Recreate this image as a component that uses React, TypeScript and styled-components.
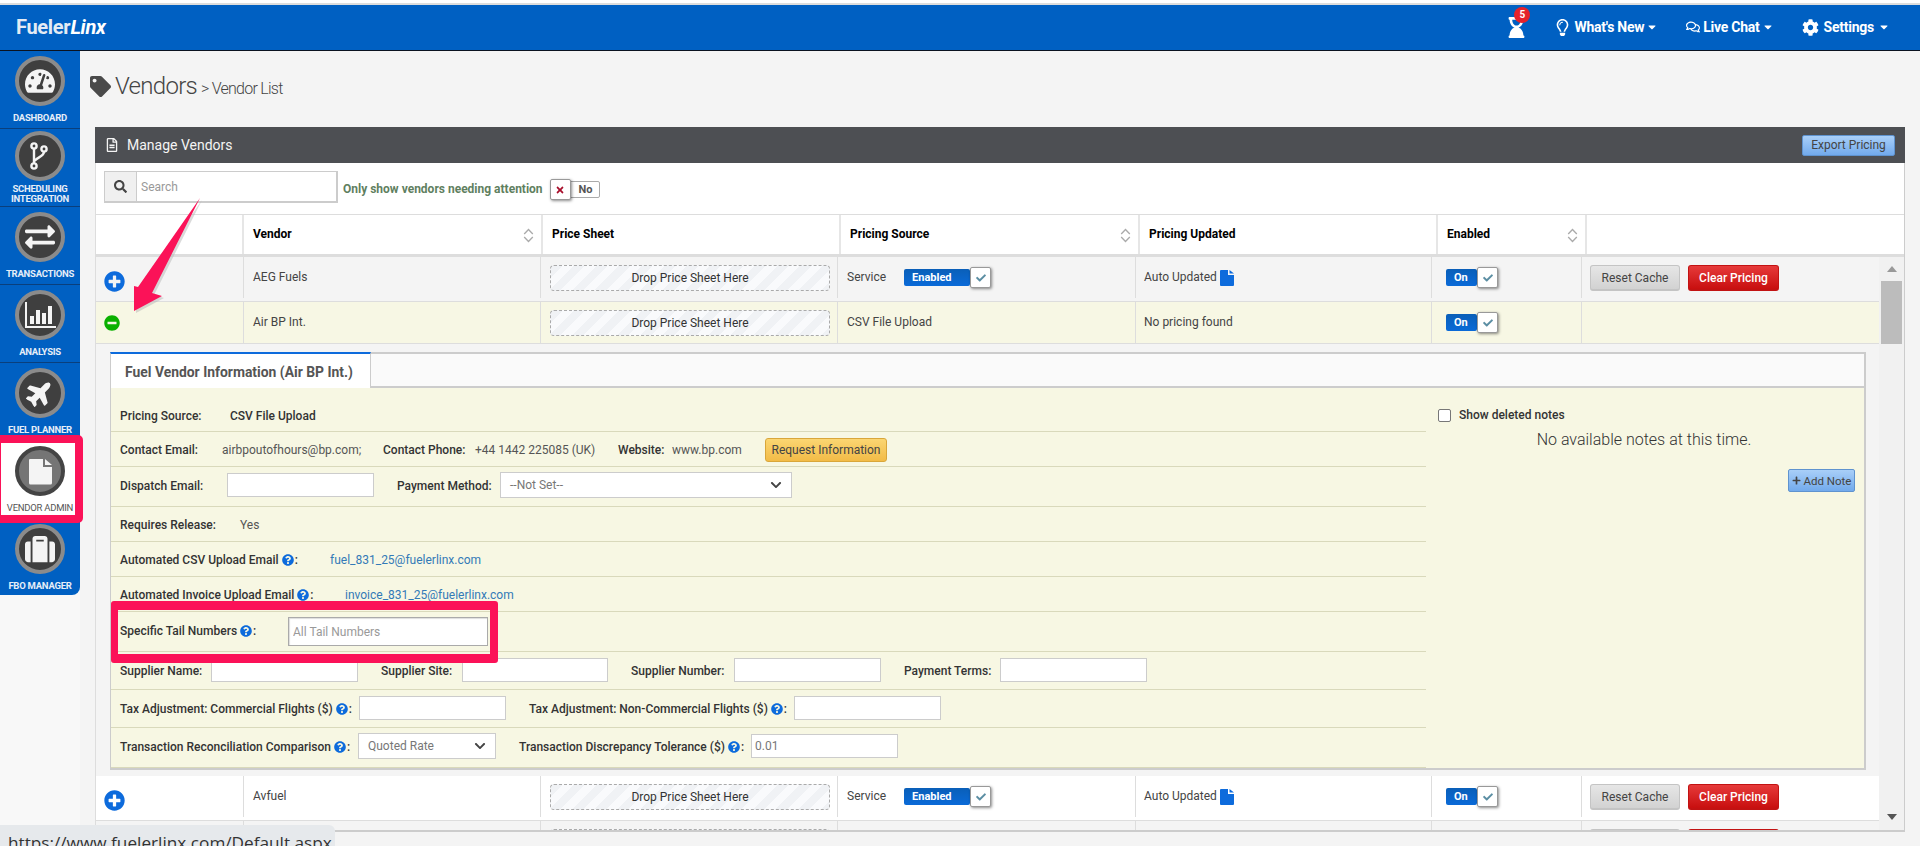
import React from "react";
import styled, { createGlobalStyle } from "styled-components";
import {
  FaCaretDown, FaCheck, FaChevronDown, FaCog, FaExchangeAlt, FaFile,
  FaHourglassEnd, FaMinusCircle, FaPlane, FaPlus, FaPlusCircle, FaQuestionCircle,
  FaRegComments, FaRegFileAlt, FaRegLightbulb, FaSearch, FaSuitcase, FaTachometerAlt, FaTag, FaTimes,
} from "react-icons/fa";

const Global = createGlobalStyle`
  html, body { margin: 0; padding: 0; background: #f4f4f4; overflow: hidden; }
  * { box-sizing: border-box; }
  body { font-family: Roboto, "Liberation Sans", sans-serif; font-size: 12px; color: #444; }
`;

const Page = styled.div`
  position: relative; width: 1920px; height: 846px; overflow: hidden;
  display: flex; flex-direction: column; background: #f4f4f4;
`;
const TopStrip = styled.div`height: 5px; background: #fff; border-bottom: 2px solid #ddd;`;
const Navbar = styled.header`
  height: 46px; background: #0060c2; border-bottom: 1px solid #0b1320;
  display: flex; align-items: center; justify-content: space-between; padding: 0 30px 1px 16px; color: #fff;
`;
const Logo = styled.div`
  font-size: 20px; font-weight: 700; color: #e4ebf4; letter-spacing: -0.3px;
  em { color: #fff; font-style: italic; }
`;
const NavRight = styled.nav`display: flex; align-items: center;`;
const HourglassWrap = styled.div`
  position: relative; width: 17px; height: 21px; margin-right: 29px; font-size: 21px; display: flex;
  align-items: center; justify-content: center;
`;
const Badge = styled.span`
  position: absolute; top: -10px; left: 6px; width: 16px; height: 16px; border-radius: 50%;
  background: #e5222c; font-size: 10px; font-weight: 700; line-height: 16px; text-align: center; color: #fff;
`;
const NavItem = styled.div<{ $ml?: number }>`
  display: flex; align-items: center; font-size: 14px; font-weight: 700; color: #fff;
  margin-left: ${(p) => p.$ml ?? 0}px; letter-spacing: -0.25px; white-space: nowrap;
`;
const NavIcon = styled.span<{ $mr: number; $size: number }>`
  display: flex; margin-right: ${(p) => p.$mr}px; font-size: ${(p) => p.$size}px;
`;
const Caret = styled.span<{ $ml: number }>`display: flex; margin-left: ${(p) => p.$ml}px; font-size: 12px;`;

const Body = styled.div`flex: 1; display: flex; min-height: 0;`;
const SideCol = styled.div`width: 80px; background: #f8f8f8; flex: none;`;
const Sidebar = styled.aside`
  width: 80px; height: 544px; background: #0060c2; border-bottom-right-radius: 8px; overflow: hidden;
`;
const SideItem = styled.div<{ $compact?: boolean; $active?: boolean; $rule?: boolean }>`
  height: 78px; display: flex; flex-direction: column; align-items: center;
  padding-top: ${(p) => (p.$compact ? 2 : 5)}px;
  background: ${(p) => (p.$active ? "#fff" : "transparent")};
  border-bottom: ${(p) => (p.$rule ? "1px solid #0a3f7c" : "none")};
`;
const Circle = styled.div<{ $active?: boolean; $size: number }>`
  width: 50px; height: 50px; border-radius: 50%; flex: none; display: flex; align-items: center; justify-content: center;
  background: ${(p) => (p.$active ? "#757575" : "#3f3f3f")};
  border: 4px solid ${(p) => (p.$active ? "#444" : "#8b8b8b")};
  color: #f4f4f4; font-size: ${(p) => p.$size}px;
`;
const PlaneTurn = styled.span`display: flex; transform: rotate(-45deg);`;
const SideLabel = styled.div<{ $active?: boolean; $compact?: boolean }>`
  margin-top: ${(p) => (p.$compact ? 3 : 7)}px; font-size: 9.5px; line-height: 10px; text-align: center;
  font-weight: ${(p) => (p.$active ? 400 : 700)}; letter-spacing: -0.25px;
  color: ${(p) => (p.$active ? "#555" : "#e6eef8")};
`;

const Main = styled.main`flex: 1; min-width: 0; padding: 0 15px;`;
const TitleRow = styled.div`
  height: 76px; padding-bottom: 6px; margin-left: -5px; display: flex; align-items: center; color: #444;
`;
const TitleIcon = styled.span`display: flex; font-size: 21px; margin-right: 4px; color: #4a4a4a;`;
const Title = styled.h1`margin: 0; font-size: 24px; font-weight: 300; letter-spacing: -0.7px;`;
const SubTitle = styled.span`font-size: 16px; font-weight: 300; margin: 4px 0 0 4px; letter-spacing: -0.75px;`;

const PanelHeader = styled.div`
  height: 36px; background: #4d4f53; color: #fff; display: flex; align-items: center; justify-content: space-between;
  padding: 0 10px; font-size: 14px;
`;
const PanelTitle = styled.div`display: flex; align-items: center; gap: 8px; color: #f4f4f4;`;
const BlueBtn = styled.button<{ $w: number; $h: number; $fs: number }>`
  width: ${(p) => p.$w}px; height: ${(p) => p.$h}px; padding: 0; border: 1px solid #5f93cf; border-radius: 2px;
  background: linear-gradient(#a9cff8, #72aaec); color: #444; font: 400 ${(p) => p.$fs}px Roboto, sans-serif;
  display: flex; align-items: center; justify-content: center; gap: 3px;
`;
const PanelBody = styled.div`
  background: #fff; border-left: 1px solid #ddd; border-right: 1px solid #ccc; border-bottom: 2px solid #ccc;
`;
const SearchRow = styled.div`
  height: 52px; border-bottom: 1px solid #ddd; display: flex; align-items: flex-start; padding: 8px 0 0 8px;
`;
const SearchBox = styled.div`
  width: 234px; height: 32px; display: flex; border: 1px solid #ccc; border-width: 1px 2px 2px 1px;
`;
const SearchIcon = styled.div`
  width: 32px; background: #f0f0f0; border-right: 1px solid #ccc; display: flex; align-items: center; justify-content: center;
  font-size: 13px; color: #444;
`;
const SearchInput = styled.input`
  flex: 1; min-width: 0; border: 0; outline: 0; padding: 0 4px; font: 12px Roboto, sans-serif; color: #555;
  &::placeholder { color: #999; }
`;
const AttentionLabel = styled.div`
  margin: 11px 7px 0 5px; font-size: 12px; font-weight: 700; color: #5f7f5f; white-space: nowrap;
`;
const NoToggle = styled.div`position: relative; margin-top: 10px; width: 50px; height: 17px; border: 1px solid #aaa; border-radius: 2px;`;
const NoText = styled.span`position: absolute; left: 28px; top: 1px; font-size: 11px; font-weight: 700; color: #555;`;
const ToggleHandle = styled.span<{ $left?: number; $right?: number; $top?: number }>`
  position: absolute; top: ${(p) => p.$top ?? -2}px; width: 21px; height: 21px; background: #fff;
  ${(p) => (p.$left !== undefined ? `left:${p.$left}px;` : "")}
  ${(p) => (p.$right !== undefined ? `right:${p.$right}px;` : "")}
  border: 1px solid #999; border-radius: 2px; box-shadow: 1px 1px 3px rgba(0,0,0,.45);
  display: flex; align-items: center; justify-content: center; font-size: 10px;
`;
const HeadGrid = styled.div`
  height: 42px; display: grid; grid-template-columns: 148px 299px 298px 299px 298px 149px 1fr;
  border-bottom: 3px solid #ddd;
`;
const HeadCell = styled.div`
  display: flex; align-items: center; justify-content: space-between; padding: 0 7px 2px 9px;
  border-right: 2px solid #e6e6e6; font-weight: 700; color: #000; font-size: 12px;
  &:last-child { border-right: 0; }
`;
const SortIcon = () => (
  <svg width="11" height="15" viewBox="0 0 11 15" fill="none" stroke="#aaa" strokeWidth="1.3" style={{ marginTop: 4 }}>
    <path d="M1.2 6 5.5 1.5 9.8 6M1.2 9 5.5 13.5 9.8 9" />
  </svg>
);
const ForkIcon = () => (
  <svg width="22" height="28" viewBox="0 0 22 28" fill="none" stroke="#f4f4f4" strokeWidth="2.4">
    <circle cx="5" cy="4" r="2.6" />
    <circle cx="5" cy="24" r="2.6" />
    <circle cx="15" cy="7" r="2.6" />
    <path d="M5 6.6V21.4M15 9.6C15 15 8 15 5.6 19" />
  </svg>
);
const BarsIcon = () => (
  <svg width="32" height="28" viewBox="0 0 32 28" fill="#f4f4f4">
    <path d="M1 1h2v24h29v2H1z" />
    <rect x="6" y="15" width="4" height="8" />
    <rect x="12" y="9" width="4" height="14" />
    <rect x="18" y="12" width="4" height="11" />
    <rect x="24" y="5" width="4" height="18" />
  </svg>
);
const PageIcon = () => (
  <svg width="24" height="27" viewBox="0 0 24 27" fill="#f4f4f4">
    <path d="M2 1h13v8h9v16a1.5 1.5 0 0 1-1.5 1.5h-20A1.5 1.5 0 0 1 1 25V2a1 1 0 0 1 1-1z" />
    <path d="M17 1l7 6h-7z" />
  </svg>
);
const BlueFile = () => (
  <svg width="14" height="16" viewBox="0 0 14 16" fill="#0d6bdc" style={{ marginLeft: 3 }}>
    <path d="M1 0h7v5h6v10a1 1 0 0 1-1 1H1a1 1 0 0 1-1-1V1a1 1 0 0 1 1-1z" />
    <path d="M9.5 0 14 3.6H9.5z" />
  </svg>
);

const ScrollArea = styled.div`height: 573px; display: flex; overflow: hidden;`;
const RowsCol = styled.div`width: 1783px; flex: none; overflow: hidden; background: #f4f4f4;`;
const Scrollbar = styled.div`flex: 1; background: #f1f1f1; display: flex; flex-direction: column; align-items: center;`;
const ArrowUp = styled.div`
  margin-top: 9px; width: 0; height: 0; border: 5px solid transparent; border-top: 0; border-bottom: 6px solid #999;
`;
const Thumb = styled.div`margin-top: 9px; width: 21px; height: 63px; background: #bcbcbc;`;
const ArrowDown = styled.div`
  margin-top: auto; margin-bottom: 10px; width: 0; height: 0; border: 5px solid transparent; border-bottom: 0; border-top: 6px solid #555;
`;
const Row = styled.div<{ $bg: string; $h: number }>`
  height: ${(p) => p.$h}px; background: ${(p) => p.$bg}; border-bottom: 1px solid #ddd;
  display: grid; grid-template-columns: 148px 297px 297px 298px 296px 150px 1fr; align-items: start;
`;
const Cell = styled.div<{ $h: number; $pl?: number; $last?: boolean }>`
  height: ${(p) => p.$h}px; padding: 13px 0 0 ${(p) => p.$pl ?? 9}px; display: flex; align-items: flex-start; white-space: nowrap;
  border-right: ${(p) => (p.$last ? "0" : "1px solid #ddd")}; color: #444; line-height: 14px; position: relative;
`;
const ExpandIcon = styled.span<{ $c: string; $size: number; $top: number }>`
  display: flex; color: ${(p) => p.$c}; font-size: ${(p) => p.$size}px; margin-top: ${(p) => p.$top}px;
`;
const DropBox = styled.div`
  width: 280px; height: 26px; margin-top: -5px; border: 1px dashed #aaa; border-radius: 4px; display: flex;
  align-items: center; justify-content: center; color: #333;
  background: repeating-linear-gradient(135deg, #f0f2f5 0 8px, #f9fafc 8px 16px);
`;
const SwitchBar = styled.div<{ $w: number; $ml: number }>`
  position: relative; width: ${(p) => p.$w}px; height: 17px; margin: -1px 0 0 ${(p) => p.$ml}px; border-radius: 2px;
  background: linear-gradient(#0a5fb8, #0a6ad8); color: #fff; font-weight: 700; font-size: 11px; line-height: 17px;
`;
const SwitchText = styled.span<{ $pl: number }>`padding-left: ${(p) => p.$pl}px;`;
const CheckMark = styled.span<{ $c: string }>`display: flex; color: ${(p) => p.$c};`;
const ActionBtn = styled.button<{ $kind: "grey" | "red"; $w: number }>`
  width: ${(p) => p.$w}px; height: 26px; margin: -5px 8px 0 0; padding: 0; border-radius: 3px; font: 12px Roboto, sans-serif;
  border: 1px solid ${(p) => (p.$kind === "red" ? "#c21212" : "#c4c4c4")};
  border-bottom-width: 2px;
  background: ${(p) => (p.$kind === "red" ? "linear-gradient(#e63a3a,#c80f0f)" : "linear-gradient(#e6e6e6,#d2d2d2)")};
  color: ${(p) => (p.$kind === "red" ? "#fff" : "#444")};
  font-weight: ${(p) => (p.$kind === "red" ? 500 : 400)};
`;

const Detail = styled.section`margin: 8px 13px 6px 14px;`;
const TabBar = styled.div`height: 36px; display: flex; background: #fafafa; border-top: 2px solid #ccc; border-right: 2px solid #ccc; border-bottom: 2px solid #ccc;`;
const Tab = styled.div`
  width: 261px; height: 36px; margin: -2px 0 0 0; background: #fff; border-top: 2px solid #0d6bdc; border-left: 1px solid #ccc;
  border-right: 1px solid #ccc; padding: 10px 0 0 14px; font-size: 13.9px; font-weight: 700; color: #555; white-space: nowrap;
`;
const DetailBody = styled.div`
  height: 382px; background: #f7f7e3; display: flex; border: 1px solid #ccc; border-width: 0 2px 2px 1px;
`;
const DetailLeft = styled.div`width: 1315px; flex: none;`;
const DetailRow = styled.div<{ $h: number; $pt?: number; $pb?: number }>`
  height: ${(p) => p.$h}px; padding: ${(p) => p.$pt ?? 0}px 0 ${(p) => p.$pb ?? 0}px 9px; display: flex; align-items: center;
  border-bottom: 1px solid #d9d9bb; white-space: nowrap;
`;
const Label = styled.span<{ $w?: number; $ml?: number }>`
  ${(p) => (p.$w ? `width:${p.$w}px;` : "")} margin-left: ${(p) => p.$ml ?? 0}px; flex: none; font-weight: 500; color: #333;
  display: inline-flex; align-items: center; padding-top: 2px;
`;
const Value = styled.span<{ $w?: number; $strong?: boolean }>`
  ${(p) => (p.$w ? `width:${p.$w}px;` : "")} flex: none; color: ${(p) => (p.$strong ? "#333" : "#555")};
  font-weight: ${(p) => (p.$strong ? 500 : 400)}; padding-top: 2px;
`;
const Link = styled.a`color: #337ab7; text-decoration: none; padding-top: 2px;`;
const Help = styled.span`display: inline-flex; color: #0d6bdc; font-size: 12px; margin: 0 1px 0 3px;`;
const GoldBtn = styled.button`
  width: 122px; height: 24px; margin-top: 1px; padding: 0; border: 1px solid #d9a63a; border-radius: 3px; font: 12px Roboto, sans-serif; color: #444;
  background: linear-gradient(#fbd672, #f2bb47);
`;
const TextInput = styled.input<{ $w: number; $h?: number }>`
  width: ${(p) => p.$w}px; height: ${(p) => p.$h ?? 24}px; flex: none; border: 1px solid #ccc; background: #fff; outline: 0;
  padding: 0 3px; font: 12px Roboto, sans-serif; color: #777;
  &::placeholder { color: #999; }
`;
const TailInput = styled(TextInput)`border: 1px solid #aaa; box-shadow: inset 1px 1px 1px #ddd; margin-top: 3px; padding: 0 4px;`;
const SelectBox = styled.div<{ $w: number }>`
  width: ${(p) => p.$w}px; height: 26px; flex: none; background: #fff; border: 1px solid #ccc; display: flex; align-items: center;
  justify-content: space-between; padding: 0 9px; color: #777;
`;
const Chevron = styled.span`display: flex; color: #444; font-size: 12px;`;
const DetailRight = styled.div`flex: 1; padding: 20px 9px 0 12px; display: flex; flex-direction: column;`;
const ShowDeleted = styled.label`display: flex; align-items: center; gap: 8px; font-weight: 500; color: #333; height: 14px;`;
const Check = styled.span`width: 13px; height: 13px; border: 1px solid #777; border-radius: 2px; background: #fff;`;
const NoNotes = styled.div`margin-top: 9px; text-align: center; font-size: 16px; font-weight: 300; color: #333; line-height: 18px; padding-right: 5px;`;
const AddRow = styled.div`display: flex; justify-content: flex-end; margin-top: 20px;`;

const PinkBox = styled.div`
  position: absolute; border-style: solid; border-color: #fb1258; pointer-events: none;
`;
const VendorMark = styled(PinkBox)`
  left: 0; top: 435px; width: 83px; height: 88px; border-width: 8px 8px 8px 1px; border-radius: 0 5px 5px 0;
`;
const TailMark = styled(PinkBox)`
  left: 111px; top: 601px; width: 387px; height: 62px; border-width: 9px 8px 9px 7px; border-radius: 3px;
`;
const ArrowSvg = styled.svg`position: absolute; left: 120px; top: 190px; pointer-events: none;`;
const StatusBubble = styled.div`
  position: absolute; left: 0; top: 825px; width: 335px; height: 21px; background: #e6e9ec; border-top-right-radius: 6px;
  padding: 7px 0 0 8px; font-family: "Open Sans", sans-serif; font-size: 17.2px; line-height: 22px; color: #333; overflow: hidden; white-space: nowrap;
`;

const sideItems = [
  { label: "DASHBOARD", icon: <FaTachometerAlt />, size: 30, rule: true },
  { label: <>SCHEDULING<br />INTEGRATION</>, icon: <ForkIcon />, size: 26, rule: true, compact: true },
  { label: "TRANSACTIONS", icon: <FaExchangeAlt />, size: 30, rule: true },
  { label: "ANALYSIS", icon: <BarsIcon />, size: 26, rule: true },
  { label: "FUEL PLANNER", icon: <PlaneTurn><FaPlane /></PlaneTurn>, size: 28 },
  { label: "VENDOR ADMIN", icon: <PageIcon />, size: 26, active: true },
  { label: "FBO MANAGER", icon: <FaSuitcase />, size: 30 },
];

const Switch = ({ label, w, ml, pl }: { label: string; w: number; ml: number; pl: number }) => (
  <SwitchBar $w={w} $ml={ml}>
    <SwitchText $pl={pl}>{label}</SwitchText>
    <ToggleHandle $right={-21} $top={-2}><CheckMark $c="#5b8ea3"><FaCheck /></CheckMark></ToggleHandle>
  </SwitchBar>
);

const VendorRow = ({ name, bg, h, cellH, expanded, service, actions, status }: {
  name: string; bg: string; h: number; cellH: number; expanded?: boolean; service: boolean; actions: boolean; status: React.ReactNode;
}) => (
  <Row $bg={bg} $h={h}>
    <Cell $h={cellH} $pl={8}>
      {expanded
        ? <ExpandIcon $c="#0ab000" $size={16} $top={0}><FaMinusCircle /></ExpandIcon>
        : <ExpandIcon $c="#0d6bdc" $size={21} $top={1}><FaPlusCircle /></ExpandIcon>}
    </Cell>
    <Cell $h={cellH}>{name}</Cell>
    <Cell $h={cellH}><DropBox>Drop Price Sheet Here</DropBox></Cell>
    <Cell $h={cellH}>
      {service ? <>Service<Switch label="Enabled" w={66} ml={18} pl={8} /></> : "CSV File Upload"}
    </Cell>
    <Cell $h={cellH} $pl={8}>{status}</Cell>
    <Cell $h={cellH} $pl={14}><Switch label="On" w={31} ml={0} pl={8} /></Cell>
    <Cell $h={cellH} $pl={8} $last>
      {actions && <>
        <ActionBtn $kind="grey" $w={90}>Reset Cache</ActionBtn>
        <ActionBtn $kind="red" $w={91}>Clear Pricing</ActionBtn>
      </>}
    </Cell>
  </Row>
);

/* The row below Avfuel is scrolled almost out of view: only the tops of its boxes show, no text. */
const PeekRow = () => (
  <Row $bg="#f4f4f4" $h={45}>
    <Cell $h={41} />
    <Cell $h={41} />
    <Cell $h={41}><DropBox /></Cell>
    <Cell $h={41} />
    <Cell $h={41} />
    <Cell $h={41} />
    <Cell $h={41} $pl={8} $last>
      <ActionBtn $kind="grey" $w={90} />
      <ActionBtn $kind="red" $w={91} />
    </Cell>
  </Row>
);

const auto = <>Auto Updated<BlueFile /></>;
const HelpIcon = () => <Help><FaQuestionCircle /></Help>;

export default function App() {
  return (
    <Page>
      <Global />
      <TopStrip />
      <Navbar>
        <Logo>Fueler<em>Linx</em></Logo>
        <NavRight>
          <HourglassWrap><FaHourglassEnd /><Badge>5</Badge></HourglassWrap>
          <NavItem>
            <NavIcon $mr={3} $size={17}><FaRegLightbulb /></NavIcon>What's New<Caret $ml={2}><FaCaretDown /></Caret>
          </NavItem>
          <NavItem $ml={28}>
            <NavIcon $mr={3} $size={14}><FaRegComments /></NavIcon>Live Chat<Caret $ml={2}><FaCaretDown /></Caret>
          </NavItem>
          <NavItem $ml={28}>
            <NavIcon $mr={5} $size={17}><FaCog /></NavIcon>Settings<Caret $ml={4}><FaCaretDown /></Caret>
          </NavItem>
        </NavRight>
      </Navbar>
      <Body>
        <SideCol>
          <Sidebar>
            {sideItems.map((s, i) => (
              <SideItem key={i} $compact={s.compact} $active={s.active} $rule={s.rule}>
                <Circle $active={s.active} $size={s.size}>{s.icon}</Circle>
                <SideLabel $active={s.active} $compact={s.compact}>{s.label}</SideLabel>
              </SideItem>
            ))}
          </Sidebar>
        </SideCol>
        <Main>
          <TitleRow>
            <TitleIcon><FaTag /></TitleIcon>
            <Title>Vendors</Title>
            <SubTitle>&gt; Vendor List</SubTitle>
          </TitleRow>
          <PanelHeader>
            <PanelTitle><FaRegFileAlt size={14} />Manage Vendors</PanelTitle>
            <BlueBtn $w={93} $h={21} $fs={12}>Export Pricing</BlueBtn>
          </PanelHeader>
          <PanelBody>
            <SearchRow>
              <SearchBox>
                <SearchIcon><FaSearch /></SearchIcon>
                <SearchInput placeholder="Search" />
              </SearchBox>
              <AttentionLabel>Only show vendors needing attention</AttentionLabel>
              <NoToggle>
                <ToggleHandle $left={-1} $top={-3}><CheckMark $c="#a80f2c"><FaTimes /></CheckMark></ToggleHandle>
                <NoText>No</NoText>
              </NoToggle>
            </SearchRow>
            <HeadGrid>
              <HeadCell />
              <HeadCell>Vendor<SortIcon /></HeadCell>
              <HeadCell>Price Sheet</HeadCell>
              <HeadCell>Pricing Source<SortIcon /></HeadCell>
              <HeadCell>Pricing Updated</HeadCell>
              <HeadCell>Enabled<SortIcon /></HeadCell>
              <HeadCell />
            </HeadGrid>
            <ScrollArea>
              <RowsCol>
                <VendorRow name="AEG Fuels" bg="#f4f4f4" h={45} cellH={41} service actions status={auto} />
                <VendorRow name="Air BP Int." bg="#f7f7e4" h={42} cellH={41} expanded service={false} actions={false} status="No pricing found" />
                <Detail>
                  <TabBar><Tab>Fuel Vendor Information (Air BP Int.)</Tab></TabBar>
                  <DetailBody>
                    <DetailLeft>
                      <DetailRow $h={44} $pt={10}>
                        <Label $w={110}>Pricing Source:</Label><Value $strong>CSV File Upload</Value>
                      </DetailRow>
                      <DetailRow $h={35}>
                        <Label $w={102}>Contact Email:</Label><Value $w={161}>airbpoutofhours@bp.com;</Value>
                        <Label $w={92}>Contact Phone:</Label><Value $w={143}>+44 1442 225085 (UK)</Value>
                        <Label $w={54}>Website:</Label><Value $w={93}>www.bp.com</Value>
                        <GoldBtn>Request Information</GoldBtn>
                      </DetailRow>
                      <DetailRow $h={40} $pb={4}>
                        <Label $w={107}>Dispatch Email:</Label><TextInput $w={147} />
                        <Label $w={103} $ml={23}>Payment Method:</Label>
                        <SelectBox $w={292}>--Not Set--<Chevron><FaChevronDown /></Chevron></SelectBox>
                      </DetailRow>
                      <DetailRow $h={35}>
                        <Label $w={120}>Requires Release:</Label><Value>Yes</Value>
                      </DetailRow>
                      <DetailRow $h={35}>
                        <Label $w={210}>Automated CSV Upload Email<HelpIcon />:</Label>
                        <Link>fuel_831_25@fuelerlinx.com</Link>
                      </DetailRow>
                      <DetailRow $h={35}>
                        <Label $w={225}>Automated Invoice Upload Email<HelpIcon />:</Label>
                        <Link>invoice_831_25@fuelerlinx.com</Link>
                      </DetailRow>
                      <DetailRow $h={40} $pb={3}>
                        <Label $w={168}>Specific Tail Numbers<HelpIcon />:</Label>
                        <TailInput $w={200} $h={29} placeholder="All Tail Numbers" />
                      </DetailRow>
                      <DetailRow $h={38} $pb={2}>
                        <Label $w={91}>Supplier Name:</Label><TextInput $w={147} />
                        <Label $w={81} $ml={23}>Supplier Site:</Label><TextInput $w={146} />
                        <Label $w={103} $ml={23}>Supplier Number:</Label><TextInput $w={147} />
                        <Label $w={96} $ml={23}>Payment Terms:</Label><TextInput $w={147} />
                      </DetailRow>
                      <DetailRow $h={38} $pb={1}>
                        <Label $w={239}>Tax Adjustment: Commercial Flights ($)<HelpIcon />:</Label><TextInput $w={147} />
                        <Label $w={265} $ml={23}>Tax Adjustment: Non-Commercial Flights ($)<HelpIcon />:</Label><TextInput $w={147} />
                      </DetailRow>
                      <DetailRow $h={40} $pb={3}>
                        <Label $w={238}>Transaction Reconciliation Comparison<HelpIcon />:</Label>
                        <SelectBox $w={138}>Quoted Rate<Chevron><FaChevronDown /></Chevron></SelectBox>
                        <Label $w={232} $ml={23}>Transaction Discrepancy Tolerance ($)<HelpIcon />:</Label>
                        <TextInput $w={147} defaultValue="0.01" />
                      </DetailRow>
                    </DetailLeft>
                    <DetailRight>
                      <ShowDeleted><Check />Show deleted notes</ShowDeleted>
                      <NoNotes>No available notes at this time.</NoNotes>
                      <AddRow><BlueBtn $w={67} $h={23} $fs={11.5}><FaPlus size={9} />Add Note</BlueBtn></AddRow>
                    </DetailRight>
                  </DetailBody>
                </Detail>
                <VendorRow name="Avfuel" bg="#fff" h={45} cellH={41} service actions status={auto} />
                <PeekRow />
              </RowsCol>
              <Scrollbar><ArrowUp /><Thumb /><ArrowDown /></Scrollbar>
            </ScrollArea>
          </PanelBody>
        </Main>
      </Body>
      <VendorMark />
      <TailMark />
      <ArrowSvg width="90" height="130" viewBox="120 190 90 130">
        <polygon points="200,198 138,287 134,286 134,311 162,296 152,293" fill="#b5b5b5" opacity=".5" transform="translate(2 2)" />
        <polygon points="200,198 138,287 134,286 134,311 162,296 152,293" fill="#fb1258" />
      </ArrowSvg>
      <StatusBubble>https://www.fuelerlinx.com/Default.aspx</StatusBubble>
    </Page>
  );
}
